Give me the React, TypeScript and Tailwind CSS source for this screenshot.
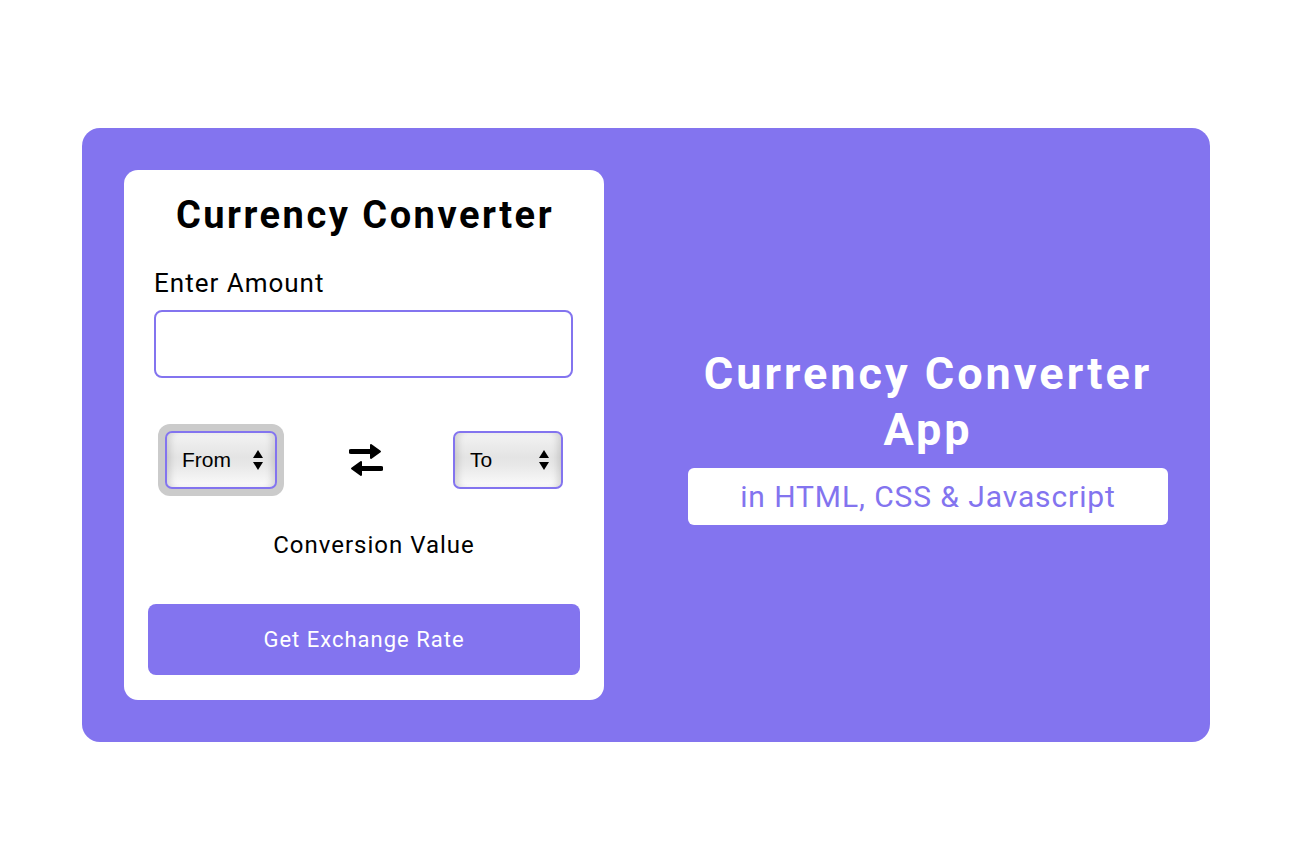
import { useState } from 'react';

const PURPLE = '#8374ef';

function SwapIcon() {
  return (
    <svg width="34" height="34" viewBox="0 0 34 34" aria-hidden="true">
      <path d="M2 8.5h22" stroke="#000" strokeWidth="5" strokeLinecap="round" />
      <path d="M22 2l9 6.5-9 6.5z" fill="#000" stroke="#000" strokeWidth="2" strokeLinejoin="round" />
      <path d="M10 25.5h22" stroke="#000" strokeWidth="5" strokeLinecap="round" />
      <path d="M12 19l-9 6.5 9 6.5z" fill="#000" stroke="#000" strokeWidth="2" strokeLinejoin="round" />
    </svg>
  );
}

function SelectBox({ label, focused }: { label: string; focused?: boolean }) {
  return (
    <div className={focused ? 'rounded-[12px] bg-[#cbcbcb] p-[7px]' : 'p-[7px]'}>
      <div
        className={`flex h-[58px] items-center justify-between rounded-[7px] border-2 border-[#8374ef] bg-[linear-gradient(to_bottom,#f3f3f3_0%,#e4e4e4_45%,#e8e8e8_60%,#fbfbfb_100%)] pl-[15px] pr-[12px] shadow-[inset_7px_0_7px_-4px_rgba(0,0,0,0.14),inset_-7px_0_7px_-4px_rgba(0,0,0,0.14)] ${
          focused ? 'w-[112px]' : 'w-[110px]'
        }`}
      >
        <span className="font-['Liberation_Sans',Arial,sans-serif] text-[21px] text-black">{label}</span>
        <svg width="10" height="22" viewBox="0 0 10 22" aria-hidden="true">
          <path d="M5 1L10 9H0z" fill="#000" />
          <path d="M5 21L10 13H0z" fill="#000" />
        </svg>
      </div>
    </div>
  );
}

export default function App() {
  const [amount, setAmount] = useState('');

  return (
    <main className="flex min-h-[868px] w-full items-start bg-white pl-[82px] pt-[128px] font-['Roboto',sans-serif]">
      <div className="flex h-[614px] w-[1128px] items-center justify-between rounded-[18px] p-[42px]" style={{ background: PURPLE }}>
        <section className="flex h-[530px] w-[480px] flex-col rounded-[14px] bg-white px-[24px] pt-[22px]">
          <h1 className="pl-[2px] text-center text-[38px] font-bold leading-[46px] tracking-[2.5px] text-black">Currency Converter</h1>

          <label className="mt-[30px] px-[6px] text-[26px] leading-[30px] tracking-[1px] text-black">Enter Amount</label>
          <div className="mt-[12px] px-[6px]">
            <input
              value={amount}
              onChange={(e) => setAmount(e.target.value)}
              className="h-[68px] w-[419px] rounded-[8px] border-2 border-[#8374ef] px-3 text-[22px] outline-none"
            />
          </div>

          <div className="mt-[46px] flex items-center justify-between pl-[10px] pr-[10px]">
            <SelectBox label="From" focused />
            <div className="flex items-center justify-center pl-[2px]">
              <SwapIcon />
            </div>
            <SelectBox label="To" />
          </div>

          <p className="mt-[35px] pl-[20px] text-center text-[24px] leading-[28px] tracking-[1px] text-black">Conversion Value</p>

          <button className="mt-[45px] h-[71px] w-[432px] rounded-[8px] text-[22px] tracking-[1px] text-white" style={{ background: PURPLE }}>
            Get Exchange Rate
          </button>
        </section>

        <section className="flex w-[480px] flex-col items-center">
          <h2 className="text-center text-[45px] font-bold leading-[56px] tracking-[3px] text-white">
            Currency Converter
            <br />
            App
          </h2>
          <div className="mt-[10px] flex h-[57px] w-[480px] items-center justify-center rounded-[6px] bg-white">
            <span className="text-[30px] tracking-[0.9px] text-[#8374ef]">in HTML, CSS &amp; Javascript</span>
          </div>
        </section>
      </div>
    </main>
  );
}
